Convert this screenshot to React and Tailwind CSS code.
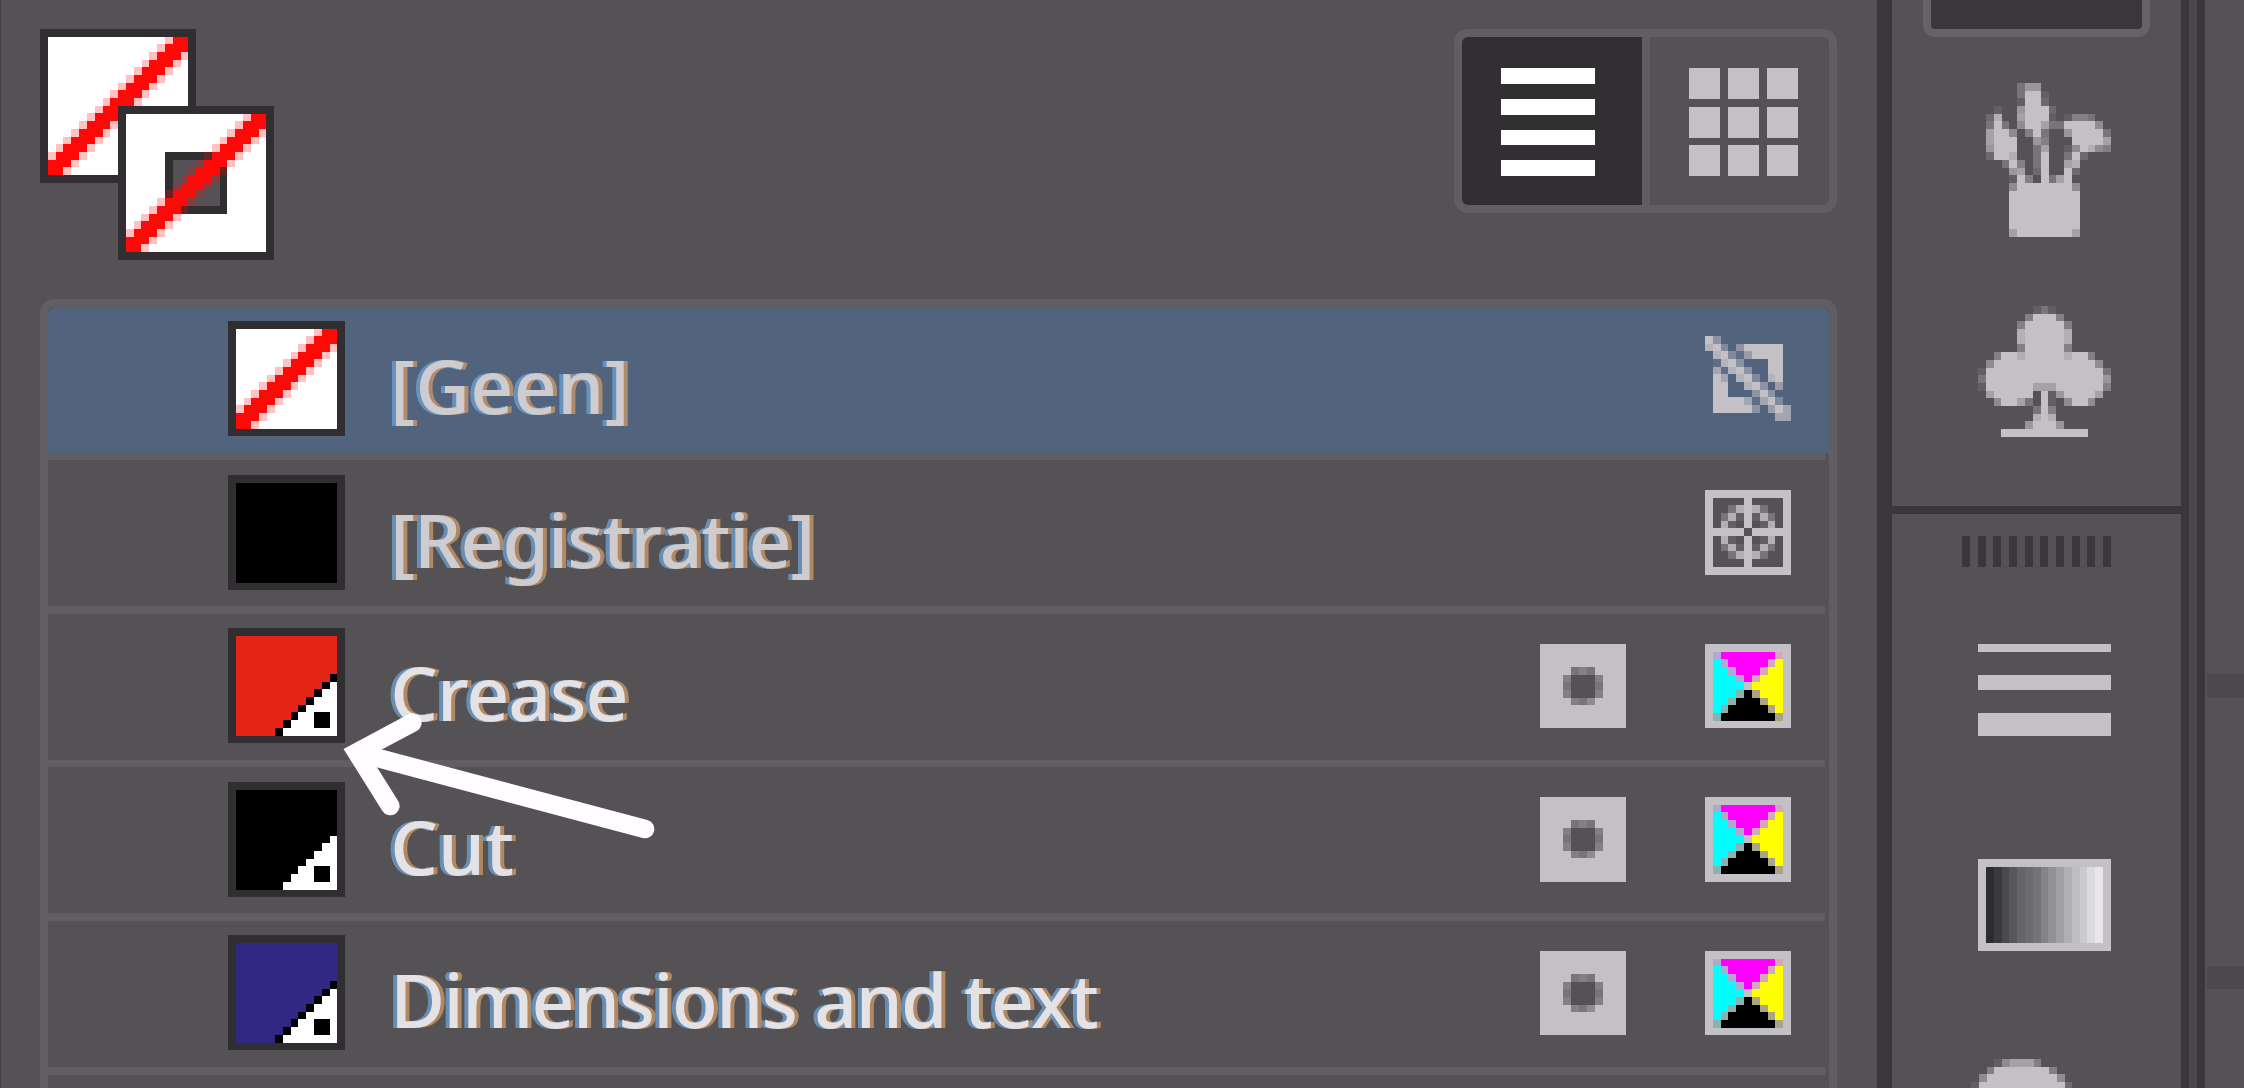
const ICON = '#c3c1c5';
const FRAME = '#302e30';

// digits are the opacity of the icon colour in tenths, '#' is solid
const TONES = {
  '#': [ICON, 1],
  1: [ICON, 0.12],
  2: [ICON, 0.22],
  3: [ICON, 0.32],
  4: [ICON, 0.42],
  5: [ICON, 0.52],
  6: [ICON, 0.62],
  7: [ICON, 0.72],
  8: [ICON, 0.85],
};

const PLANT = [
  '....366.........',
  '....3##1........',
  '....1##2........',
  '.1..6###2.......',
  '28..7###1.1443..',
  '3#3.5##733####5.',
  '7##5.4#3..6####3',
  '7###..64...####7',
  '6###..37..15#854',
  '2##8..3#..3#2...',
  '..3#4.3#..78....',
  '...67.2#..#2....',
  '...1#4.#37#.....',
  '...5#######5....',
  '...#########....',
  '...#########....',
  '...#########....',
  '...#########....',
  '...#########....',
  '...7#######7....',
];

const CLUB = [
  '.......131.......',
  '......4###4......',
  '.....4#####4.....',
  '.....8#####8.....',
  '.....8#####8.....',
  '.....4#####4.....',
  '..4##8#####8##4..',
  '.5#############5.',
  '1###############3',
  '3###############6',
  '1######777######4',
  '.7#####.#16####7.',
  '..5##73.#1.5##5..',
  '.......3#4.......',
  '.......8#8.......',
  '......6###6......',
  '...###########...',
];

const KNOB = [
  '...157774....',
  '..4#######4..',
  '.5#########5.',
  '1###########2',
];

const NONE = [
  '#5.........',
  '8#4.5#####.',
  '.8#416####.',
  '.18#5...##.',
  '.718#5..##.',
  '.#7.8#4.8#.',
  '.##..8#5.6.',
  '.##...5#5..',
  '.####717#4.',
  '.#####5.6#7',
  '.........77',
];

const REGISTRATION = [
  '###########',
  '#....#....#',
  '#..38#83..#',
  '#.381#183.#',
  '#.81.#.18.#',
  '#####.#####',
  '#.81.#.18.#',
  '#.381#183.#',
  '#..38#83..#',
  '#....#....#',
  '###########',
];

const SPOT = [
  '###########',
  '###########',
  '###########',
  '####343####',
  '###4...4###',
  '###3...3###',
  '###4...4###',
  '####435####',
  '###########',
  '###########',
  '###########',
];

const CMYK = [
  '###########',
  '#ammmmmmmb#',
  '#cammmmmby#',
  '#ccammmbyy#',
  '#cccambyyy#',
  '#cccc#yyyy#',
  '#cccdkeyyy#',
  '#ccdkkkeyy#',
  '#cdkkkkkey#',
  '#dkkkkkkke#',
  '###########',
];

const CMYK_COLORS = {
  m: ['#ff00ff', 1],
  c: ['#00ffff', 1],
  y: ['#ffff00', 1],
  k: ['#000000', 1],
  a: ['#b3a6d0', 1],
  b: ['#d2a9b8', 1],
  d: ['#8eb1b0', 1],
  e: ['#aaa488', 1],
};

const GRADIENT = [
  '#2d2c2e', '#3a393b', '#4a494b', '#575658', '#656466',
  '#6c6b6d', '#747375', '#848385', '#929193', '#a1a0a2',
  '#b0afb1', '#bfbec0', '#cbcacd', '#dbdadd', '#e8e6ea',
];

const slash = (size) =>
  Array.from({ length: size }, (_, r) =>
    Array.from({ length: size }, (_, c) => {
      const d = Math.abs(r + c - size + 1);
      return d < 2 ? 'r' : d === 2 ? 'p' : '.';
    }).join('')
  );

const SLASH_COLORS = { r: ['#ff0808', 1], p: ['#ff0808', 0.25] };

const Pixels = ({ rows, colors = TONES, x = 0, y = 0 }) => {
  const rects = [];
  rows.forEach((row, r) => {
    let c = 0;
    while (c < row.length) {
      let end = c + 1;
      while (end < row.length && row[end] === row[c]) end++;
      const tone = colors[row[c]];
      if (tone) {
        rects.push(
          <rect key={`${r}-${c}`} x={x + c} y={y + r} width={end - c} height={1} fill={tone[0]} fillOpacity={tone[1]} />
        );
      }
      c = end;
    }
  });
  return rects;
};

const PixelIcon = ({ rows, colors, className }) => (
  <svg
    className={`block shrink-0 ${className}`}
    viewBox={`0 0 ${rows[0].length} ${rows.length}`}
    preserveAspectRatio="none"
    shapeRendering="crispEdges"
  >
    <Pixels rows={rows} colors={colors} />
  </svg>
);

const BigSwatch = ({ hole, className = '' }) => (
  <svg
    className={`block w-[156.3px] h-[153.6px] ${className}`}
    viewBox="0 0 20 20"
    preserveAspectRatio="none"
    shapeRendering="crispEdges"
  >
    <rect width="20" height="20" fill={FRAME} />
    <rect x="1" y="1" width="18" height="18" fill="#fff" />
    {hole && <rect x="6" y="6" width="8" height="8" fill={FRAME} />}
    {hole && <rect x="7" y="7" width="6" height="6" fill="#545254" />}
    <Pixels rows={slash(18)} colors={SLASH_COLORS} x={1} y={1} />
  </svg>
);

const Swatch = ({ color, spot }) => (
  <svg
    className="block shrink-0 w-[117.3px] h-[115.2px]"
    viewBox="0 0 15 15"
    preserveAspectRatio="none"
    shapeRendering="crispEdges"
  >
    <rect width="15" height="15" fill={FRAME} />
    <rect x="1" y="1" width="13" height="13" fill={color || '#fff'} />
    {!color && <Pixels rows={slash(13)} colors={SLASH_COLORS} x={1} y={1} />}
    {spot &&
      Array.from({ length: 8 }, (_, i) => (
        <g key={i}>
          <rect x={13 - i} y={6 + i} width="1" height="1" fill="#000" />
          <rect x={14 - i} y={6 + i} width={i} height="1" fill="#fff" />
        </g>
      ))}
    {spot && <rect x="11" y="11" width="2" height="2" fill="#000" />}
  </svg>
);

const ROWS = [
  { name: '[Geen]', selected: true, icon: NONE, tracking: 'tracking-[0.4px]' },
  { name: '[Registratie]', color: '#000', icon: REGISTRATION, tracking: 'tracking-[-1px]' },
  { name: 'Crease', color: '#e62517', spot: true, tracking: 'tracking-[-1px]' },
  { name: 'Cut', color: '#000', spot: true, tracking: 'tracking-[0.2px]' },
  { name: 'Dimensions and text', color: '#312884', spot: true, tracking: 'tracking-[-1.6px]' },
];

const SwatchRow = ({ row }) => (
  <>
    <div
      className={`flex items-start h-[145.9px] pt-[14.4px] pl-[180px] pr-[38.5px] ${
        row.selected ? 'bg-[#51637d] rounded-t-[8px]' : ''
      }`}
    >
      <Swatch color={row.color} spot={row.spot} />
      <span
        className={`ml-[45px] mt-[16px] text-[75px] leading-[96px] whitespace-pre font-['Noto_Sans',sans-serif] font-medium [text-shadow:-4px_0_0_#6b9fcecc,4px_0_0_#d39b66bb] ${row.tracking} ${
          row.spot ? 'text-[#e4e2e5]' : 'text-[#cecccf]'
        }`}
      >
        {row.name}
      </span>
      <div className="ml-auto flex gap-[78.4px] mt-[15.4px]">
        {row.spot && <PixelIcon rows={SPOT} className="w-[86px] h-[84.5px]" />}
        <PixelIcon
          rows={row.icon || CMYK}
          colors={{ ...TONES, ...CMYK_COLORS }}
          className="w-[86px] h-[84.5px]"
        />
      </div>
    </div>
    <div className="h-[7.7px] mr-[4px] bg-[#605e61]" />
  </>
);

const ViewToggle = () => (
  <div className="flex w-[383px] h-[184px] border-8 border-[#605e61] rounded-[14px]">
    <div className="flex flex-col gap-[15px] w-[180px] pt-[31px] pl-[39px] bg-[#312f32] rounded-l-[6px]">
      {[0, 1, 2, 3].map((i) => (
        <div key={i} className="w-[94px] h-[15.7px] bg-white" />
      ))}
    </div>
    <div className="w-[8px] bg-[#605e61]" />
    <div className="grid grid-cols-[31px_31px_31px] grid-rows-[31px_31px_31px] gap-x-[8px] gap-y-[7.4px] pt-[31px] pl-[39px]">
      {Array.from({ length: 9 }, (_, i) => (
        <div key={i} className="bg-[#c3c1c5]" />
      ))}
    </div>
  </div>
);

const SwatchPanel = () => (
  <div className="flex flex-col w-[1877px] h-full pl-[39px] pr-[40px] border-l border-[#403e41]">
    <div className="flex justify-between shrink-0 h-[298.7px] pt-[29.4px]">
      <div className="relative">
        <BigSwatch />
        <BigSwatch hole className="absolute left-[78.2px] top-[76.8px]" />
      </div>
      <ViewToggle />
    </div>
    <div className="shrink-0 border-8 border-b-0 border-[#605e61] rounded-t-[14px] h-[820px]">
      {ROWS.map((row) => (
        <SwatchRow key={row.name} row={row} />
      ))}
    </div>
  </div>
);

const Dock = () => (
  <div className="flex flex-col items-center w-[289px] h-full overflow-hidden">
    <div className="shrink-0 w-[227px] h-[37px] border-8 border-t-0 border-[#656366] rounded-b-[12px] bg-[#39373a]" />
    <PixelIcon rows={PLANT} className="w-[125px] h-[153.8px] mt-[46px] ml-[24px]" />
    <PixelIcon rows={CLUB} className="w-[133px] h-[130.7px] mt-[69.2px] ml-[16px]" />
    <div className="shrink-0 w-full h-[8px] mt-[69.3px] bg-[#39373a]" />
    <div className="shrink-0 flex justify-between w-[149px] h-[31px] mt-[22px]">
      {Array.from({ length: 10 }, (_, i) => (
        <div key={i} className="w-[8px] bg-[#39373a]" />
      ))}
    </div>
    <div className="shrink-0 w-[133px] h-[8px] mt-[77px] ml-[16px] bg-[#c3c1c5]" />
    <div className="shrink-0 w-[133px] h-[15px] mt-[23px] ml-[16px] bg-[#c3c1c5]" />
    <div className="shrink-0 w-[133px] h-[23px] mt-[23px] ml-[16px] bg-[#c3c1c5]" />
    <div className="shrink-0 flex w-[133px] h-[92px] mt-[123px] ml-[16px] border-8 border-[#c3c1c5]">
      {GRADIENT.map((color) => (
        <div key={color} className="flex-1" style={{ backgroundColor: color }} />
      ))}
    </div>
    <PixelIcon rows={KNOB} className="w-[101.6px] h-[30.7px] mt-[108px] -ml-[30px]" />
  </div>
);

const Arrow = () => (
  <svg className="absolute left-[340px] top-[700px]" width="330" height="150" viewBox="340 700 330 150">
    <g fill="none" stroke="#fffdff" strokeWidth="18.6" strokeLinecap="round" strokeLinejoin="miter">
      <path d="M412.3 722.7 L356.7 752.4 L390.3 806" />
      <path d="M359 753 L645 829" />
    </g>
  </svg>
);

export default function App() {
  return (
    <div className="relative flex w-[2244px] h-[1088px] overflow-hidden bg-[#545254]">
      <SwatchPanel />
      <div className="w-[15px] bg-[#39373a]" />
      <Dock />
      <div className="w-[8px] bg-[#39373a]" />
      <div className="w-[8px] bg-[#4a484b]" />
      <div className="w-[8px] bg-[#39373a]" />
      <div className="flex-1 pl-[2px]">
        <div className="h-[24px] mt-[674px] bg-[#4b494c]" />
        <div className="h-[23px] mt-[268px] bg-[#4b494c]" />
      </div>
      <Arrow />
    </div>
  );
}
